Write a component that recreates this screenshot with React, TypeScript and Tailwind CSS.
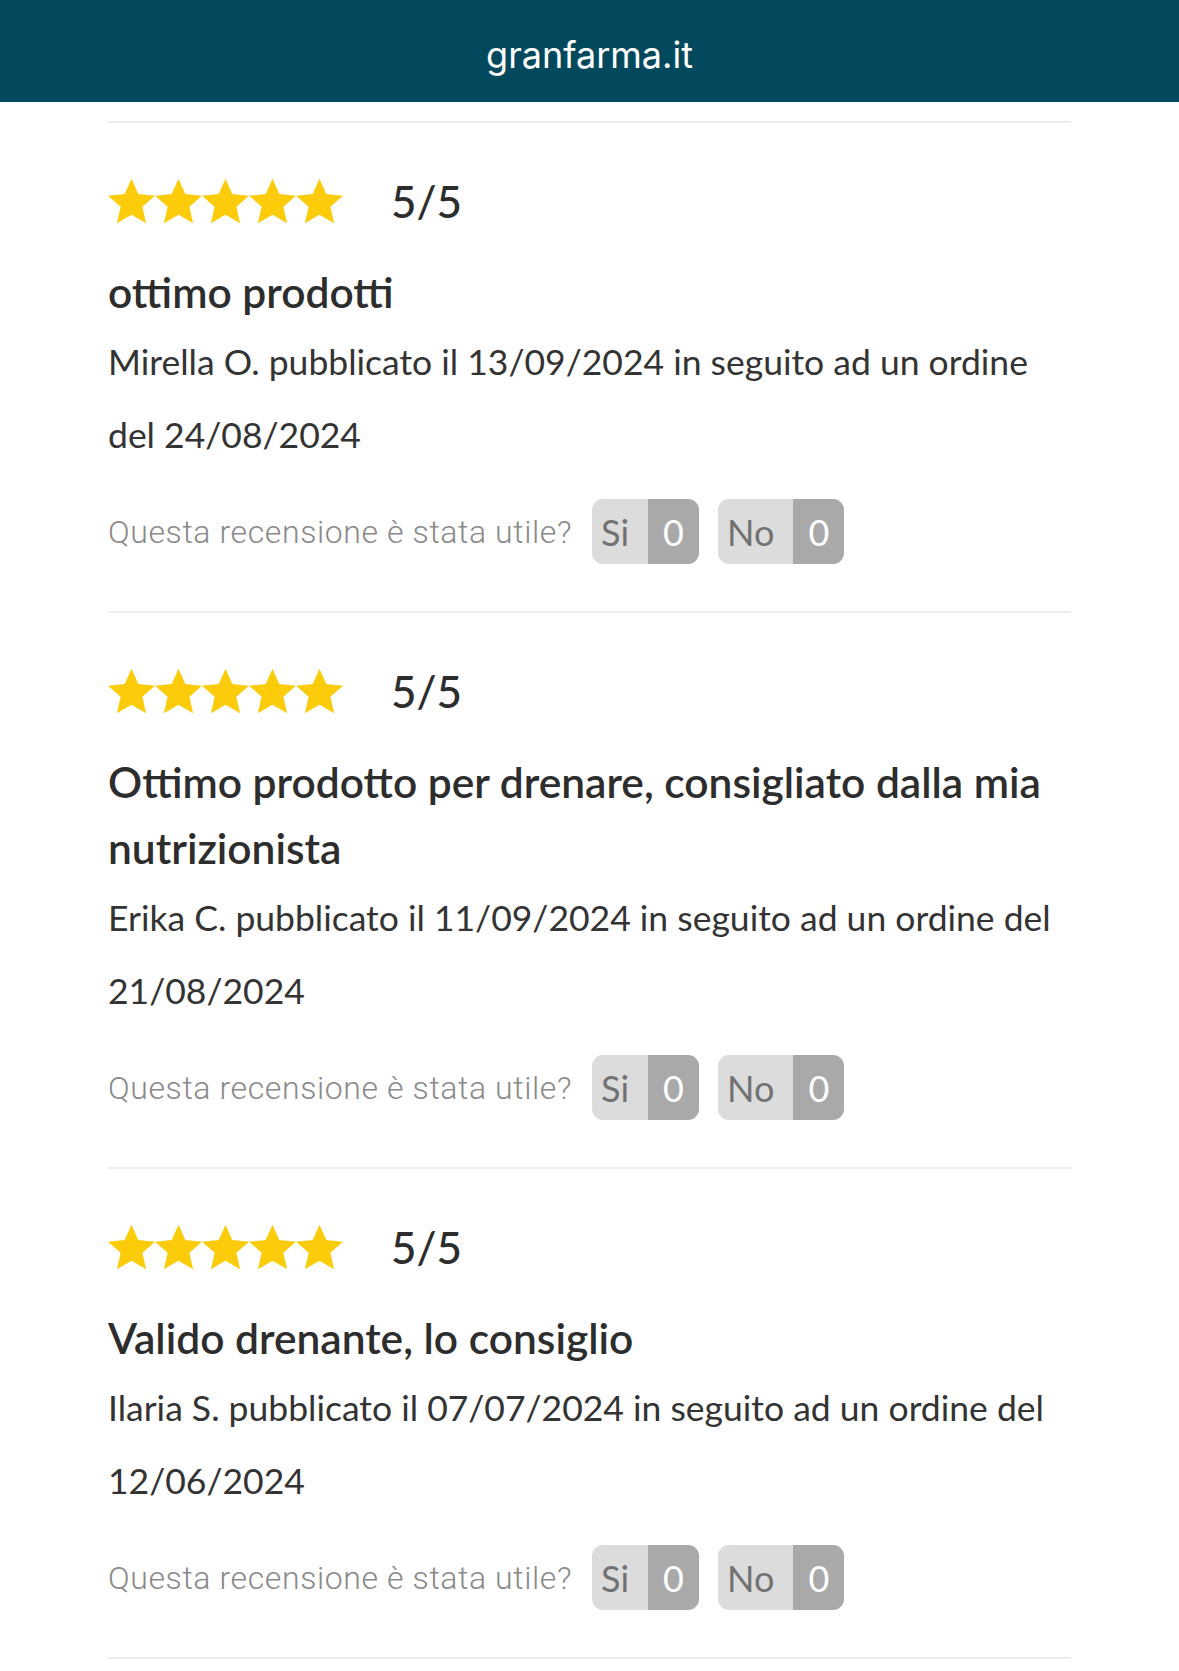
import React from "react";

type Review = {
  title: string;
  body: string;
};

const reviews: Review[] = [
  {
    title: "ottimo prodotti",
    body: "Mirella O. pubblicato il 13/09/2024 in seguito ad un ordine del 24/08/2024",
  },
  {
    title: "Ottimo prodotto per drenare, consigliato dalla mia nutrizionista",
    body: "Erika C. pubblicato il 11/09/2024 in seguito ad un ordine del 21/08/2024",
  },
  {
    title: "Valido drenante, lo consiglio",
    body: "Ilaria S. pubblicato il 07/07/2024 in seguito ad un ordine del 12/06/2024",
  },
];

function Star() {
  return (
    <svg viewBox="1.45 1.3 21.1 21.1" className="w-[47px] h-[47px]" fill="#fccc0a">
      <path d="M12 1.6l3.05 6.9 7.5.72-5.66 5 1.66 7.36L12 17.75 5.45 21.58l1.66-7.36-5.66-5 7.5-.72z" />
    </svg>
  );
}

function VoteButton({ label, count }: { label: string; count: number }) {
  return (
    <div className="flex h-[65px] rounded-[11px] overflow-hidden text-[36px]">
      <span className="flex items-center bg-[#dcdcdc] text-[#727272] pl-[9px] pr-[19px]">{label}</span>
      <span className="flex items-center justify-center bg-[#a9a9a9] text-white w-[51px]">{count}</span>
    </div>
  );
}

function ReviewItem({ review }: { review: Review }) {
  return (
    <div className="border-t-2 border-[#eeeeee] pt-[47px] pb-[47px]">
      {/* stelle + voto */}
      <div className="flex items-center h-[62px]">
        <div className="flex">
          {[0, 1, 2, 3, 4].map((i) => (
            <Star key={i} />
          ))}
        </div>
        <span className="ml-[48px] text-[44px] font-medium text-[#2d2d2d]">5/5</span>
      </div>

      <h3 className="mt-[27px] text-[42.5px] leading-[66px] font-semibold text-[#2d2d2d]">
        {review.title}
      </h3>
      <p className="text-[35.5px] leading-[73px] text-[#333333]">{review.body}</p>

      {/* utile? */}
      <div className="mt-[28px] flex items-center">
        <span className="font-['Roboto',sans-serif] text-[32px] tracking-[0.6px] font-light text-[#8a8a8a] mr-[20px]">
          Questa recensione è stata utile?
        </span>
        <VoteButton label="Si" count={0} />
        <div className="w-[19px]" />
        <VoteButton label="No" count={0} />
      </div>
    </div>
  );
}

export default function App() {
  return (
    <div className="min-h-screen bg-white font-['Lato',sans-serif]">
      <header className="h-[102px] bg-[#02495d] flex items-center justify-center pt-[8px]">
        <span className="text-white text-[36px] font-['Inter',sans-serif]">granfarma.it</span>
      </header>

      <main className="px-[108px] pt-[19px]">
        {reviews.map((r) => (
          <ReviewItem key={r.title} review={r} />
        ))}
        <div className="border-t-2 border-[#eeeeee]" />
      </main>
    </div>
  );
}
